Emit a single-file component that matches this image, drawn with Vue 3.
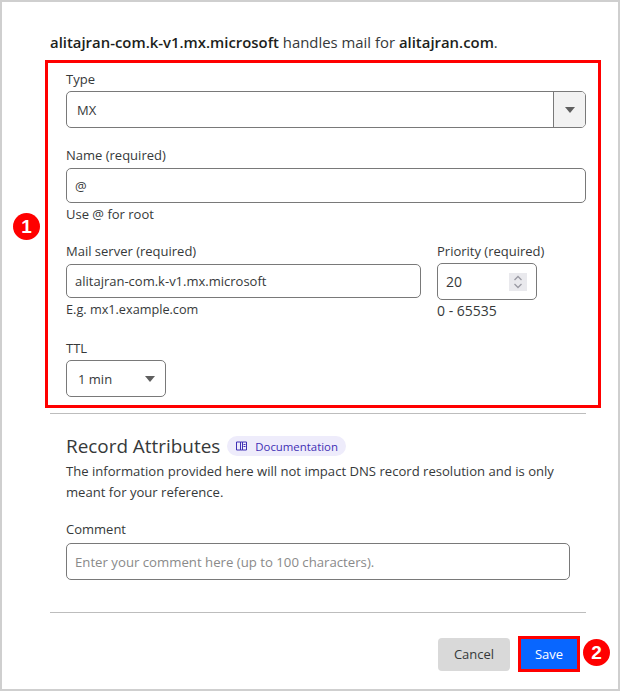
<template>
  <div class="page">
    <p class="intro"><b>alitajran-com.k-v1.mx.microsoft</b> handles mail for <b>alitajran.com</b>.</p>

    <div class="marked">
      <span class="step step-one">1</span>

      <div class="field type-field">
        <label>Type</label>
        <div class="box select-box">
          <span class="value">MX</span>
          <span class="addon"><i class="caret"></i></span>
        </div>
      </div>

      <div class="field name-field">
        <label>Name (required)</label>
        <div class="box name-box"><span class="value">@</span></div>
        <small>Use @ for root</small>
      </div>

      <div class="mail-row">
        <div class="field mail-field">
          <label>Mail server (required)</label>
          <div class="box mail-box"><span class="value">alitajran-com.k-v1.mx.microsoft</span></div>
          <small class="example">E.g. mx1.example.com</small>
        </div>
        <div class="field priority-field">
          <label>Priority (required)</label>
          <div class="box priority-box">
            <span class="value number">20</span>
            <span class="spinner">
              <svg width="18" height="18" viewBox="0 0 18 18" fill="none" stroke="#9a9aa3" stroke-width="1.3">
                <path d="M5.500 7 9 3.500 12.500 7" />
                <path d="M5.500 11 9 14.500 12.500 11" />
              </svg>
            </span>
          </div>
          <small class="range">0 - 65535</small>
        </div>
      </div>

      <div class="field ttl-field">
        <label>TTL</label>
        <div class="box ttl-box">
          <span class="value">1 min</span>
          <i class="caret"></i>
        </div>
      </div>
    </div>

    <hr class="rule rule-top" />

    <section class="attributes">
      <div class="title-row">
        <h2>Record Attributes</h2>
        <span class="doc-pill">
          <svg width="11" height="10" viewBox="0 0 11 10" fill="none" stroke="#3f2fb5" stroke-width="1">
            <path d="M.5 1h4v8h-4zM6.500 1h4v8h-4z" />
            <path d="M4.500 1h2M4.500 9h2M7.500 3.500h2M7.500 5.500h2" />
          </svg>
          Documentation
        </span>
      </div>
      <p class="note">The information provided here will not impact DNS record resolution and is only meant for your reference.</p>

      <div class="field comment-field">
        <label>Comment</label>
        <div class="box comment-box"><span class="placeholder">Enter your comment here (up to 100 characters).</span></div>
      </div>
    </section>

    <hr class="rule rule-bottom" />

    <div class="actions">
      <button class="cancel">Cancel</button>
      <button class="save">Save</button>
      <span class="step step-two">2</span>
    </div>
  </div>
</template>

<script setup>
</script>

<style>
html,
body {
  margin: 0;
  background: #fff;
}
</style>

<style scoped>
.page {
  box-sizing: border-box;
  width: 620px;
  height: 691px;
  padding: 30px 32px 0 48px;
  border: 2px solid #cfcfcf;
  background: #fff;
  font-family: "Open Sans", "Liberation Sans", sans-serif;
  font-size: 13px;
  color: #36393a;
  overflow: hidden;
}

.intro {
  margin: 0;
  height: 28px;
  font-size: 14.900px;
  line-height: 20px;
  white-space: nowrap;
}

.intro b {
  color: #1d1f20;
  font-weight: 600;
}

.marked {
  position: relative;
  box-sizing: border-box;
  width: 556px;
  height: 348px;
  margin-left: -5px;
  padding: 7px 12px 0 18px;
  border: 3px solid #f00;
}

.field {
  display: flex;
  flex-direction: column;
}

.field label {
  height: 21px;
  line-height: 18px;
  white-space: nowrap;
}

.field small {
  margin-top: 2px;
  font-size: 13px;
  line-height: 18px;
}

.field .example {
  font-size: 12.700px;
}

.field .range {
  font-size: 14px;
}

.box {
  box-sizing: border-box;
  display: flex;
  align-items: center;
  padding-left: 8px;
  border: 1px solid #797979;
  border-radius: 5px;
  background: #fff;
}

.value {
  font-size: 13px;
}

.number {
  font-size: 14px;
}

.select-box {
  height: 37px;
  padding-left: 10px;
  overflow: hidden;
}

.addon {
  display: flex;
  align-items: center;
  justify-content: center;
  width: 31px;
  height: 100%;
  margin-left: auto;
  border-left: 1px solid #797979;
  background: #f2f2f2;
}

.caret {
  width: 0;
  height: 0;
  border-left: 5px solid transparent;
  border-right: 5px solid transparent;
  border-top: 6px solid #5f5f5f;
}

.name-field {
  margin-top: 18px;
}

.name-field label {
  height: 22px;
}

.name-box {
  height: 35px;
}

.mail-row {
  display: flex;
  gap: 16px;
  margin-top: 19px;
}

.mail-field {
  width: 355px;
}

.mail-field label {
  height: 22px;
}

.mail-box {
  height: 34px;
}

.priority-field {
  width: 100px;
}

.priority-box {
  height: 37px;
  padding-left: 8px;
}

.spinner {
  display: flex;
  width: 18px;
  height: 18px;
  margin-left: auto;
  margin-right: 9px;
  background: #e9e9ed;
}

.ttl-field {
  margin-top: 19px;
}

.ttl-box {
  justify-content: space-between;
  width: 100px;
  height: 37px;
  padding-right: 10px;
  padding-left: 11px;
}

.rule {
  height: 1px;
  margin: 0;
  border: 0;
  background: #bdbdbd;
}

.rule-top {
  margin-top: 5px;
}

.attributes {
  padding: 20px 16px 0;
}

.title-row {
  display: flex;
  align-items: center;
  gap: 7px;
  height: 24px;
}

h2 {
  margin: 0;
  font-size: 18.900px;
  font-weight: 400;
  color: #36393a;
}

.doc-pill {
  display: inline-flex;
  align-items: center;
  gap: 8px;
  height: 20px;
  padding: 0 8px 0 9px;
  border-radius: 10px;
  background: #eeecfb;
  color: #3f2fb5;
  font-size: 11.400px;
}

.note {
  margin: 3px 0 0;
  font-size: 13.100px;
  line-height: 21px;
}

.comment-field {
  margin-top: 17px;
}

.comment-field label {
  height: 23px;
}

.comment-box {
  width: 504px;
  height: 37px;
}

.placeholder {
  color: #8a8a8a;
  font-size: 13.200px;
}

.rule-bottom {
  margin-top: 32px;
}

.actions {
  position: relative;
  display: flex;
  justify-content: flex-end;
  align-items: center;
  gap: 8px;
  margin-top: 23px;
  padding-right: 6px;
}

button {
  height: 33px;
  padding: 0;
  border: 0;
  border-radius: 4px;
  font-family: inherit;
  font-size: 13px;
}

.cancel {
  width: 72px;
  background: #d9d9d9;
  color: #36393a;
}

.save {
  box-sizing: content-box;
  width: 56px;
  height: 30px;
  border: 3px solid #f00;
  border-radius: 0;
  background: #0866ff;
  color: #fff;
}

.step {
  position: absolute;
  display: flex;
  align-items: center;
  justify-content: center;
  width: 27px;
  height: 27px;
  border-radius: 50%;
  background: #f00;
  color: #fff;
  font-family: "Liberation Sans", sans-serif;
  font-size: 19px;
  font-weight: 700;
}

.step-one {
  left: -35px;
  top: 150px;
}

.step-two {
  right: -24px;
  top: 3px;
}
</style>
